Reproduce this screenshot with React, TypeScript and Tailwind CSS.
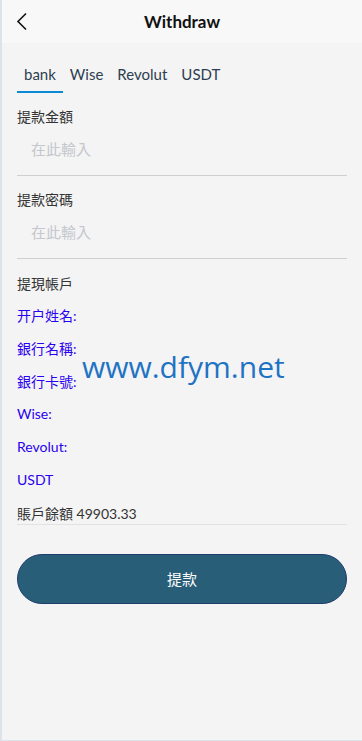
const rows = ["开户姓名:", "銀行名稱:", "銀行卡號:", "Wise:", "Revolut:", "USDT"];
const tabs = ["bank", "Wise", "Revolut", "USDT"];

const Field = ({ label }: { label: string }) => (
  <div className="flex flex-col">
    <p className="h-[33px] leading-[33px] text-[14px] text-[#333]">{label}</p>
    <div className="h-[33px] leading-[33px] pl-[14px] text-[15px] text-[#c4c7cd]">在此輸入</div>
    <div className="h-px bg-[#cfcfcf] mt-[9px]" />
  </div>
);

export default function App() {
  return (
    <div
      className="relative w-[362px] h-[741px] bg-[#f4f4f4] border-l-2 border-b border-[#dde3ea] overflow-hidden"
      style={{ fontFamily: 'Lato, "Noto Sans CJK TC", sans-serif' }}
    >
      <header className="h-[43px] bg-[#f8f8f8] flex items-center relative">
        <svg className="absolute left-[14px] top-[12px]" width="12" height="19" viewBox="0 0 12 19" fill="none">
          <path d="M10 1.5 L2 9.5 L10 17.5" stroke="#111" strokeWidth="1.6" />
        </svg>
        <h1 className="flex-1 text-center text-[17px] font-bold text-[#111]">Withdraw</h1>
      </header>

      <div className="px-[15px]">
        <nav className="flex mt-[16px] h-[34px]">
          {tabs.map((t, i) => (
            <div
              key={t}
              className={`px-[7px] h-[34px] leading-[30px] text-[15px] text-[#2c3e50] ${i === 0 ? "border-b-2 border-[#0b8ad6]" : ""}`}
            >
              {t}
            </div>
          ))}
        </nav>

        <div className="mt-[7px]">
          <Field label="提款金額" />
          <div className="mt-[7px]">
            <Field label="提款密碼" />
          </div>
        </div>

        <p className="mt-[8px] h-[33px] leading-[33px] text-[14px] text-[#333]">提現帳戶</p>
        {rows.map((r) => (
          <p key={r} className="h-[32.8px] leading-[32.8px] text-[14px] text-[#2a00f0]">
            {r}
          </p>
        ))}
        <p className="mt-[6px] h-[22px] leading-[21px] text-[14px] text-[#333] border-b border-[#e2e2e2]">
          賬戶餘額 49903.33
        </p>

        <button className="mt-[29px] w-full h-[50px] rounded-full bg-[#285e78] border border-[#1f3c6e] text-white text-[15px]">
          提款
        </button>
      </div>

      <div
        className="absolute left-[80px] top-[344px] text-[30px] text-[#1f73c3]"
        style={{ fontFamily: '"Open Sans", sans-serif' }}
      >
        www.dfym.net
      </div>
    </div>
  );
}
